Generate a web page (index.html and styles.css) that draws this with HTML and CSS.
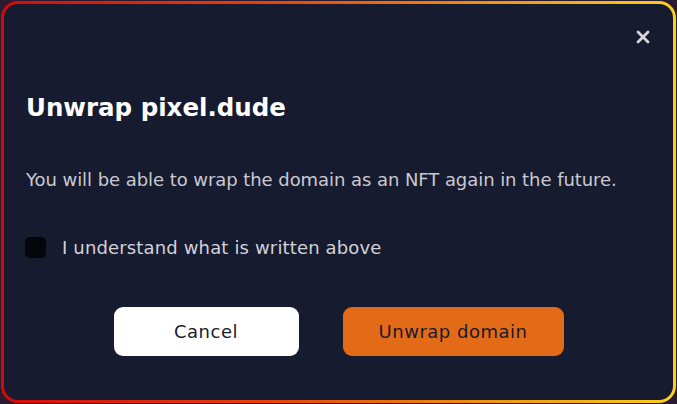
FILE: index.html
```html
<html>
<head>
  <link rel="stylesheet" href="styles.css">
</head>
<body>
  <div class="frame">
    <div class="dialog">
      <div class="dialog-top">
        <button class="close" aria-label="Close">
          <svg width="14" height="14" viewBox="0 0 14 14">
            <path d="M2 2 L12 12 M12 2 L2 12" stroke="#d6d6dc" stroke-width="2.8" stroke-linecap="round"/>
          </svg>
        </button>
      </div>
      <h1 class="title">Unwrap pixel.dude</h1>
      <p class="text">You will be able to wrap the domain as an NFT again in the future.</p>
      <label class="check">
        <span class="box"></span>
        I understand what is written above
      </label>
      <div class="actions">
        <button class="btn btn-light">Cancel</button>
        <button class="btn btn-orange">Unwrap domain</button>
      </div>
    </div>
  </div>
</body>
</html>
```
FILE: styles.css
```css
body {
  margin: 0;
  padding: 1px;
  background: #2a1b30;
  font-family: "DejaVu Sans", sans-serif;
}

.frame {
  height: 402px;
  box-sizing: border-box;
  padding: 3px;
  border-radius: 17px;
  background: linear-gradient(90deg, #d40a0a 0%, #e8430c 40%, #f19a12 75%, #fbd01c 100%);
}

.dialog {
  height: 100%;
  box-sizing: border-box;
  border-radius: 14px;
  background: #171b2f;
  padding: 0 21px;
}

.dialog-top {
  display: flex;
  justify-content: flex-end;
  padding-top: 26px;
  padding-right: 2px;
}

.close {
  background: none;
  border: none;
  padding: 0;
  width: 14px;
  height: 14px;
  display: flex;
}

.title {
  margin: 48px 0 0 1px;
  font-size: 24.5px;
  line-height: 32px;
  font-weight: bold;
  color: #ffffff;
}

.text {
  margin: 44px 0 0 1px;
  font-size: 18px;
  line-height: 24px;
  letter-spacing: -0.06px;
  color: #c9c9d1;
}

.check {
  display: flex;
  align-items: center;
  gap: 16px;
  margin-top: 45px;
  font-size: 18px;
  letter-spacing: 0.15px;
  color: #d2d2d8;
}

.box {
  width: 21px;
  height: 21px;
  border-radius: 5px;
  background: #05060c;
}

.actions {
  display: flex;
  justify-content: center;
  gap: 44px;
  margin-top: 49px;
}

.btn {
  height: 49px;
  border: none;
  border-radius: 9px;
  font-family: "DejaVu Sans", sans-serif;
  font-size: 18px;
  letter-spacing: 0.5px;
  color: #171b2f;
}

.btn-light {
  width: 185px;
  background: #ffffff;
}

.btn-orange {
  width: 221px;
  background: #e36a16;
}
```
